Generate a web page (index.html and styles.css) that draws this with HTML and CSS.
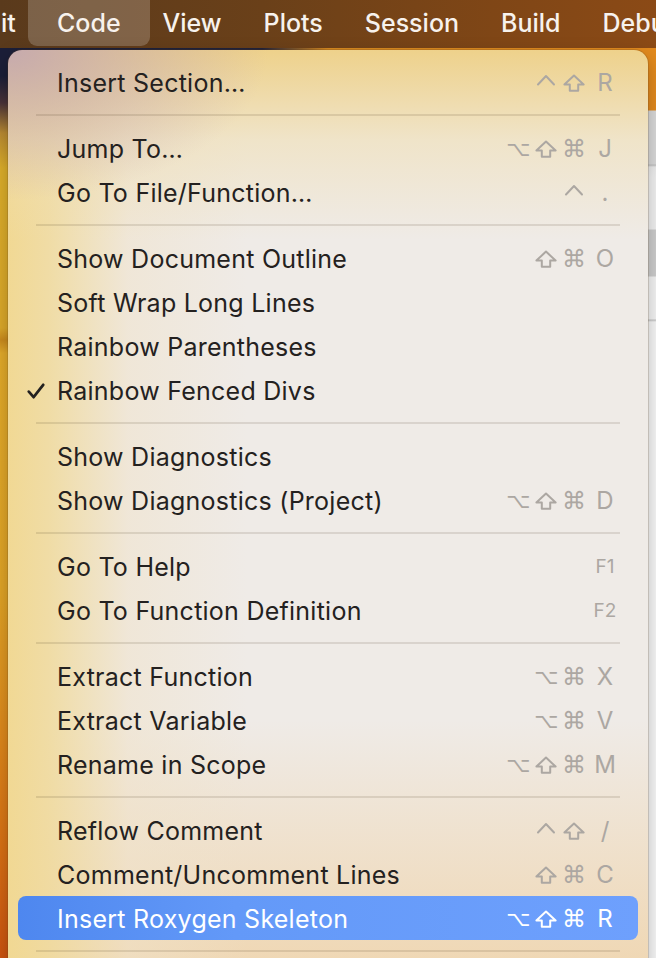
FILE: index.html
```html
<!DOCTYPE html>
<html lang="en">
<head>
<meta charset="utf-8">
<title>Code menu</title>
<link rel="stylesheet" href="styles.css">
</head>
<body>
<svg width="0" height="0" class="defs" aria-hidden="true">
  <defs>
    <symbol id="shift" viewBox="0 0 22 18"><path d="M11 1.6 L20.6 10.6 L15.2 10.6 L15.2 16.8 L6.8 16.8 L6.8 10.6 L1.4 10.6 Z" fill="none" stroke="currentColor" stroke-width="2" stroke-linejoin="round"/></symbol>
    <symbol id="ctrl" viewBox="0 0 20 12"><path d="M2 10.5 L10 2 L18 10.5" fill="none" stroke="currentColor" stroke-width="2" stroke-linecap="round" stroke-linejoin="round"/></symbol>
  </defs>
</svg>
<div class="screen">
  <header class="menubar">
    <span class="mb-item mb-first">it</span>
    <span class="mb-item mb-active">Code</span>
    <span class="mb-item">View</span>
    <span class="mb-item">Plots</span>
    <span class="mb-item">Session</span>
    <span class="mb-item">Build</span>
    <span class="mb-item mb-last">Debu</span>
  </header>
  <main class="desktop">
    <div class="menu">
      <div class="row"><span class="label">Insert Section…</span><span class="sc"><span class="mods"><i class="ic-ctrl"><svg width="20" height="12"><use href="#ctrl"/></svg></i><i><svg width="22" height="18"><use href="#shift"/></svg></i></span><span class="key">R</span></span></div>
      <div class="sep"></div>
      <div class="row"><span class="label">Jump To…</span><span class="sc"><span class="mods"><i class="opt">⌥</i><i><svg width="22" height="18"><use href="#shift"/></svg></i><i>⌘</i></span><span class="key">J</span></span></div>
      <div class="row"><span class="label">Go To File/Function…</span><span class="sc"><span class="mods"><i class="ic-ctrl"><svg width="20" height="12"><use href="#ctrl"/></svg></i></span><span class="key">.</span></span></div>
      <div class="sep"></div>
      <div class="row"><span class="label">Show Document Outline</span><span class="sc"><span class="mods"><i><svg width="22" height="18"><use href="#shift"/></svg></i><i>⌘</i></span><span class="key">O</span></span></div>
      <div class="row"><span class="label">Soft Wrap Long Lines</span></div>
      <div class="row"><span class="label">Rainbow Parentheses</span></div>
      <div class="row"><svg class="check" viewBox="0 0 18 16" width="18" height="16"><path d="M1.8 8.6 L6.6 14.2 L16.2 1.8" fill="none" stroke="#232120" stroke-width="2.7" stroke-linecap="round" stroke-linejoin="round"/></svg><span class="label">Rainbow Fenced Divs</span></div>
      <div class="sep"></div>
      <div class="row"><span class="label">Show Diagnostics</span></div>
      <div class="row"><span class="label">Show Diagnostics (Project)</span><span class="sc"><span class="mods"><i class="opt">⌥</i><i><svg width="22" height="18"><use href="#shift"/></svg></i><i>⌘</i></span><span class="key">D</span></span></div>
      <div class="sep"></div>
      <div class="row"><span class="label">Go To Help</span><span class="sc"><span class="key fkey">F1</span></span></div>
      <div class="row"><span class="label">Go To Function Definition</span><span class="sc"><span class="key fkey">F2</span></span></div>
      <div class="sep"></div>
      <div class="row"><span class="label">Extract Function</span><span class="sc"><span class="mods"><i class="opt">⌥</i><i>⌘</i></span><span class="key">X</span></span></div>
      <div class="row"><span class="label">Extract Variable</span><span class="sc"><span class="mods"><i class="opt">⌥</i><i>⌘</i></span><span class="key">V</span></span></div>
      <div class="row"><span class="label">Rename in Scope</span><span class="sc"><span class="mods"><i class="opt">⌥</i><i><svg width="22" height="18"><use href="#shift"/></svg></i><i>⌘</i></span><span class="key">M</span></span></div>
      <div class="sep"></div>
      <div class="row"><span class="label">Reflow Comment</span><span class="sc"><span class="mods"><i class="ic-ctrl"><svg width="20" height="12"><use href="#ctrl"/></svg></i><i><svg width="22" height="18"><use href="#shift"/></svg></i></span><span class="key">/</span></span></div>
      <div class="row"><span class="label">Comment/Uncomment Lines</span><span class="sc"><span class="mods"><i><svg width="22" height="18"><use href="#shift"/></svg></i><i>⌘</i></span><span class="key">C</span></span></div>
      <div class="row row-active"><span class="label">Insert Roxygen Skeleton</span><span class="sc"><span class="mods"><i class="opt">⌥</i><i><svg width="22" height="18"><use href="#shift"/></svg></i><i>⌘</i></span><span class="key">R</span></span></div>
      <div class="sep"></div>
    </div>
  </main>
</div>
</body>
</html>
```

FILE: styles.css
```css
* { box-sizing: border-box; }
html, body { margin: 0; padding: 0; }
body {
  width: 656px;
  height: 958px;
  overflow: hidden;
  font-family: Inter, "Noto Sans", sans-serif;
}
.defs { position: absolute; width: 0; height: 0; }
.screen {
  width: 656px;
  height: 958px;
  display: flex;
  flex-direction: column;
  overflow: hidden;
}

/* ---------- menu bar ---------- */
.menubar {
  height: 48px;
  flex: none;
  display: flex;
  align-items: flex-start;
  white-space: nowrap;
  overflow: hidden;
  background: linear-gradient(to right, #5a3a1c 0%, #6a4019 40%, #7f4616 75%, #8b4a16 100%);
  color: #f7f2ed;
  font-size: 25px;
  font-weight: 500;
}
.mb-item {
  height: 46px;
  display: flex;
  align-items: center;
  padding: 0 21px;
  flex: none;
}
.mb-first {
  width: 28px;
  padding: 0 0 0 1px;
  overflow: hidden;
}
.mb-last { padding-right: 0; }
.mb-active {
  padding: 0 29px;
  margin-right: -8px;
  border-radius: 0 0 9px 9px;
  background: rgba(255, 255, 255, 0.2);
}

/* ---------- desktop / wallpaper ---------- */
.desktop {
  flex: 1;
  min-height: 0;
  padding: 2px 8px 0 8px;
  background:
    linear-gradient(to bottom,
      #1b1e38 0, #1b1e38 28px, #4a3238 55px, #b98a32 85px,
      #dcae2a 120px, #dba82a 280px, #c98a1c 292px, #e2aa2a 305px,
      #e0a426 540px, #de8a1c 680px, #d87014 800px, #cc5410 910px) left top / 8px 100% no-repeat,
    linear-gradient(to bottom,
      #e28a1e 0, #e28a1e 62px, #d9d9d9 63px, #d9d9d9 116px, #bfbfbf 117px,
      #ececec 119px, #f1f1f1 130px, #f1f1f1 181px, #cdcdcd 182px,
      #cdcdcd 228px, #f4f4f4 229px, #f4f4f4 271px, #c4c4c4 272px,
      #f7f7f7 274px, #f7f7f7 100%) right top / 8px 100% no-repeat,
    linear-gradient(to right, #1b1e38 0, #23233a 40%, #d88a20 50%, #e28a1e 100%);
}

/* ---------- the menu ---------- */
.menu {
  width: 640px;
  height: 930px;
  padding: 10px 10px 0 10px;
  border-radius: 14px 14px 0 0;
  box-shadow: 0 0 0 1px rgba(90, 60, 30, 0.18), 0 6px 18px rgba(0, 0, 0, 0.25);
  background:
    radial-gradient(ellipse 260px 150px at 0 0, rgba(196, 168, 176, 0.95), rgba(206, 178, 176, 0) 100%),
    linear-gradient(to bottom, rgba(238, 208, 134, 0.95) 0, rgba(240, 222, 176, 0.55) 90px, rgba(239, 233, 226, 0) 190px),
    linear-gradient(to right, rgba(241, 216, 146, 0.98) 0, rgba(240, 218, 156, 0.88) 40px, rgba(240, 226, 200, 0.5) 120px, rgba(239, 235, 231, 0) 240px),
    linear-gradient(to top, rgba(240, 200, 140, 0.6) 0, rgba(240, 200, 140, 0) 260px),
    #efebe7;
  color: #242120;
}
.row {
  position: relative;
  height: 44px;
  display: flex;
  align-items: center;
  padding: 1px 21px 0 39px;
  border-radius: 8px;
  font-size: 25px;
  letter-spacing: 0.25px;
  white-space: nowrap;
}
.label { flex: 1; }
.check {
  position: absolute;
  left: 9px;
  top: 15px;
}
.row-active {
  background: linear-gradient(to right, #4e87ef 0, #6399f8 35%, #6ea0fd 100%);
  color: #ffffff;
}
.row-active .sc { color: #ffffff; }
.sep {
  height: 22px;
  display: flex;
  align-items: center;
  padding: 0 18px;
}
.sep::before {
  content: "";
  display: block;
  flex: 1;
  height: 2px;
  background: rgba(60, 40, 20, 0.12);
}

/* ---------- shortcuts ---------- */
.sc {
  display: flex;
  align-items: center;
  color: #aca7a2;
  letter-spacing: 0;
}
.mods {
  display: flex;
  align-items: center;
  margin-right: 5px;
}
.mods i {
  font-style: normal;
  width: 28px;
  height: 30px;
  display: flex;
  align-items: center;
  justify-content: center;
  font-family: "DejaVu Sans", sans-serif;
  font-size: 24px;
}
.mods .opt { font-size: 21px; }
.mods i svg { display: block; }
.mods .ic-ctrl { align-items: flex-start; padding-top: 6px; }
.key {
  width: 24px;
  text-align: center;
  font-size: 24px;
}
.fkey {
  font-size: 19px;
}
```
